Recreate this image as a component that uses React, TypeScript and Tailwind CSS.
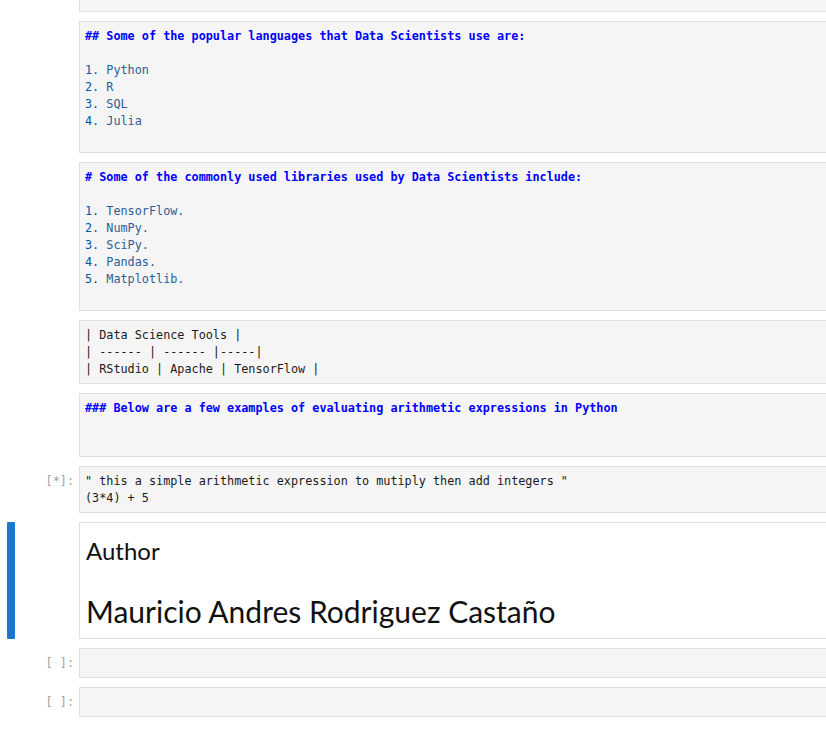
import React from 'react';

const mono = "font-['DejaVu_Sans_Mono','Liberation_Mono',monospace] text-[11.8px] leading-[17px]";

type Line = { parts: { text: string; cls?: string }[] };

const header = (t: string): Line => ({ parts: [{ text: t, cls: 'text-[#0000ff] font-bold' }] });
const item = (n: string, t: string): Line => ({
  parts: [
    { text: n + ' ', cls: 'text-[#0055aa]' },
    { text: t, cls: 'text-[#2d5d96]' },
  ],
});
const plain = (t: string): Line => ({ parts: [{ text: t, cls: 'text-[#1a1a1a]' }] });
const blank: Line = { parts: [{ text: '' }] };

const SourceCell = ({ lines, prompt }: { lines: Line[]; prompt?: string }) => (
  <div className="flex">
    <div className={`w-[79px] shrink-0 pr-[5px] pt-[6.5px] text-right text-[#a0a0a0] ${mono}`}>
      {prompt}
    </div>
    <div className="flex-1 border border-[#e0e0e0] bg-[#f5f5f5] px-[5px] pt-[5.5px] pb-[5px]">
      {lines.map((l, i) => (
        <div key={i} className={`${mono} whitespace-pre h-[17px]`}>
          {l.parts.map((p, j) => (
            <span key={j} className={p.cls}>
              {p.text}
            </span>
          ))}
        </div>
      ))}
    </div>
  </div>
);

export default function App() {
  return (
    <div className="w-[826px] h-[744px] overflow-hidden bg-white">
      <div className="w-[846px] flex flex-col gap-[9.5px] -mt-[35px]">
        <SourceCell lines={[blank, blank]} />
        <SourceCell
          lines={[
            header('## Some of the popular languages that Data Scientists use are:'),
            blank,
            item('1.', 'Python'),
            item('2.', 'R'),
            item('3.', 'SQL'),
            item('4.', 'Julia'),
            blank,
          ]}
        />
        <SourceCell
          lines={[
            header('# Some of the commonly used libraries used by Data Scientists include:'),
            blank,
            item('1.', 'TensorFlow.'),
            item('2.', 'NumPy.'),
            item('3.', 'SciPy.'),
            item('4.', 'Pandas.'),
            item('5.', 'Matplotlib.'),
            blank,
          ]}
        />
        <SourceCell
          lines={[
            plain('| Data Science Tools |'),
            plain('| ------ | ------ |-----|'),
            plain('| RStudio | Apache | TensorFlow |'),
          ]}
        />
        <SourceCell
          lines={[
            header('### Below are a few examples of evaluating arithmetic expressions in Python'),
            blank,
            blank,
          ]}
        />
        <SourceCell
          prompt="[*]:"
          lines={[
            plain('" this a simple arithmetic expression to mutiply then add integers "'),
            plain('(3*4) + 5'),
          ]}
        />

        {/* rendered markdown cell, selected */}
        <div className="flex h-[116.5px]">
          <div className="w-[79px] shrink-0 pl-[7px]">
            <div className="w-[8px] h-full bg-[#1976d2] rounded-[1px]" />
          </div>
          <div className="flex-1 border border-[#e0e0e0] bg-white pl-[6px] pt-[13px] font-['Lato','Noto_Sans',sans-serif] text-[#111111]">
            <h2 className="text-[24px] leading-[30px]">Author</h2>
            <h1 className="mt-[27px] text-[30px] leading-[36px]">Mauricio Andres Rodriguez Castaño</h1>
          </div>
        </div>

        <SourceCell prompt="[ ]:" lines={[blank]} />
        <SourceCell prompt="[ ]:" lines={[blank]} />
      </div>
    </div>
  );
}
